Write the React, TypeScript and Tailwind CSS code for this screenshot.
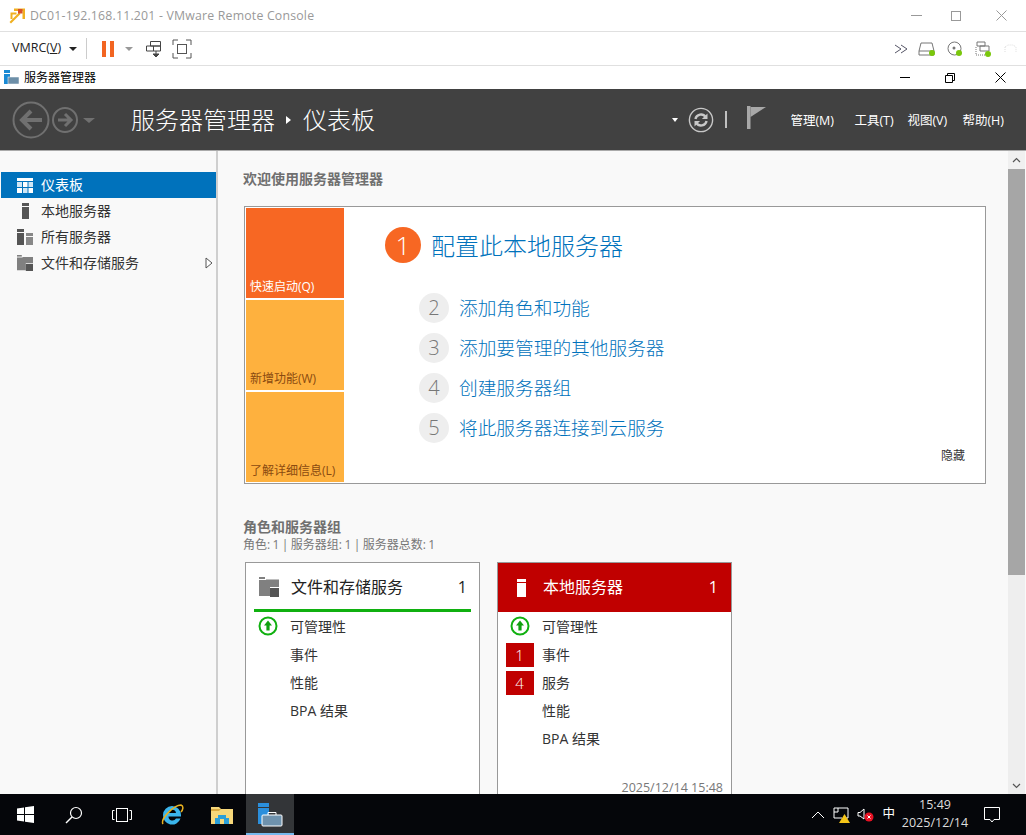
import { ReactNode } from "react";

const font = { fontFamily: '"Open Sans", "Noto Sans CJK SC", sans-serif' };

function UpIcon() {
  return (
    <svg width="20" height="20" viewBox="0 0 20 20">
      <circle cx="10" cy="10" r="8.5" fill="#fff" stroke="#10b010" strokeWidth="2" />
      <path d="M10 4.5 L14 9.5 H11.6 V14.5 H8.4 V9.5 H6 Z" fill="#10a010" />
    </svg>
  );
}

function FilesIcon({ size = 20, light = "#808080", dark = "#555" }: { size?: number; light?: string; dark?: string }) {
  return (
    <svg width={size} height={size} viewBox="0 0 20 20">
      <path d="M0 0 H6 V2 H0 Z" fill={light} />
      <path d="M0 3 H7 V2.5 H20 V10 H11 V19 H0 Z" fill={light} />
      <path d="M11 11 H20 V20 H11 Z" fill={dark} />
    </svg>
  );
}

function NavItem({ icon, label, active, arrow }: { icon: ReactNode; label: string; active?: boolean; arrow?: boolean }) {
  return (
    <div className={`flex h-[26px] items-center text-[14px] ${active ? "bg-[#0072bc] text-white" : "text-[#333]"}`}>
      <div className="flex w-[40px] justify-center pl-[8px]">{icon}</div>
      <span className="flex-1 pb-[2px]">{label}</span>
      {arrow && (
        <svg width="8" height="12" viewBox="0 0 8 12" className="mr-[3px]">
          <path d="M1 1 L7 6 L1 11 Z" fill="#fff" stroke="#555" strokeWidth="1" />
        </svg>
      )}
    </div>
  );
}

function Tile({ label, color, text }: { label: string; color: string; text: string }) {
  return (
    <div className={`flex h-[90px] items-end px-[4px] pb-[3px] text-[12px] leading-[16px] ${color} ${text}`}>{label}</div>
  );
}

function Step({ n, label }: { n: number; label: string }) {
  return (
    <div className="flex h-[40px] items-center">
      <div className="flex h-[30px] w-[30px] items-center justify-center rounded-full bg-[#eeeeee] text-[20px] font-light text-[#777]">
        {n}
      </div>
      <span className="ml-[10px] text-[18.7px] font-light text-[#0072bc]">{label}</span>
    </div>
  );
}

function Row({ badge, up, label }: { badge?: number; up?: boolean; label: string }) {
  return (
    <div className="flex h-[28px] items-center text-[14px] text-[#333]">
      <div className="flex w-[44px] items-center justify-center pr-[1px]">
        {up && <UpIcon />}
        {badge !== undefined && (
          <div className="mt-[2px] flex h-[24px] w-[28px] items-center justify-center bg-[#c00000] text-[15px] font-light text-white">
            {badge}
          </div>
        )}
      </div>
      <span>{label}</span>
    </div>
  );
}

export default function App() {
  return (
    <div style={font} className="flex h-[835px] w-[1026px] flex-col overflow-hidden bg-white">
      {/* vmrc title bar */}
      <div className="flex h-[32px] shrink-0 items-center border-b border-[#e0e0e0] pl-[9px]">
        <svg width="16" height="16" viewBox="0 0 16 16">
          <path d="M5 0.5 H16 V11 H13.5 V3 H5 Z" fill="#f0b020" />
          <path d="M10 4.5 L0.5 14 L2 15.5 L11.5 6 Z" fill="#f0b020" />
          <path d="M1.5 4.5 H7.5 V6.5 H3.5 V11 H1.5 Z" fill="#f0b020" />
          <rect x="9" y="1" width="4.5" height="4.5" fill="#d9502a" />
        </svg>
        <span className="ml-[5px] pt-[2px] text-[12.3px] tracking-[0.2px] text-[#999]">DC01-192.168.11.201 - VMware Remote Console</span>
        <div className="ml-auto flex items-center">
          <div className="h-[1px] w-[11px] bg-[#999]" />
          <div className="ml-[29px] h-[10px] w-[10px] border border-[#999]" />
          <svg width="11" height="11" viewBox="0 0 11 11" className="ml-[35px] mr-[19px]">
            <path d="M0.5 0.5 L10.5 10.5 M10.5 0.5 L0.5 10.5" stroke="#999" />
          </svg>
        </div>
      </div>

      {/* vmrc toolbar */}
      <div className="flex h-[34px] shrink-0 items-center border-b border-[#e0e0e0] pl-[12px]">
        <span className="text-[12.5px] text-[#222]">
          VMRC(<span className="underline">V</span>)
        </span>
        <div className="ml-[8px] h-0 w-0 border-x-[4px] border-t-[4px] border-x-transparent border-t-[#222]" />
        <div className="ml-[9px] h-[21px] w-[1px] bg-[#ccc]" />
        <div className="ml-[15px] h-[16px] w-[4px] bg-[#f26522]" />
        <div className="ml-[4px] h-[16px] w-[4px] bg-[#f26522]" />
        <div className="ml-[11px] h-0 w-0 border-x-[4px] border-t-[4px] border-x-transparent border-t-[#999]" />
        <svg width="18" height="18" viewBox="0 0 18 18" className="ml-[12px]">
          <path d="M5.5 1.5 H15.5 V6 H5.5 Z M1.5 6 H15.5 V11 H1.5 Z M8.5 6 V11" fill="none" stroke="#444" />
          <path d="M11 11 V14 M8 14 L11 17 L14 14 Z" fill="#444" stroke="#444" />
        </svg>
        <svg width="20" height="20" viewBox="0 0 20 20" className="ml-[9px]">
          <path d="M1 6 V1 H6 M14 1 H19 V6 M19 14 V19 H14 M6 19 H1 V14" fill="none" stroke="#555" />
          <rect x="5.5" y="5.5" width="9" height="9" fill="none" stroke="#555" />
        </svg>
        <div className="ml-auto flex items-center">
          <svg width="15" height="10" viewBox="0 0 15 10">
            <path d="M1 1 L7 5 L1 9 M7 1 L13 5 L7 9" fill="none" stroke="#556" />
          </svg>
          <svg width="18" height="14" viewBox="0 0 18 14" className="ml-[9px]">
            <path d="M3 1 H14 L16 9 V13 H1 V9 Z M1 9 H16" fill="none" stroke="#777" />
            <circle cx="14" cy="11" r="3" fill="#7ac70c" />
          </svg>
          <svg width="16" height="16" viewBox="0 0 16 16" className="ml-[11px]">
            <circle cx="7.5" cy="7.5" r="6.5" fill="none" stroke="#777" />
            <circle cx="7" cy="7" r="1.5" fill="#777" />
            <circle cx="12" cy="12" r="3" fill="#7ac70c" />
          </svg>
          <svg width="16" height="16" viewBox="0 0 16 16" className="ml-[12px]">
            <path d="M2 1 H10 V5 H2 Z M5 5 H14 V10 H5 Z" fill="none" stroke="#777" />
            <path d="M1 6 V14 H10" fill="none" stroke="#777" strokeDasharray="1 1" />
            <circle cx="13" cy="13" r="3" fill="#7ac70c" />
          </svg>
          <svg width="13" height="10" viewBox="0 0 13 10" className="ml-[13px] mr-[9px]">
            <path d="M1 3 L4 1 H9 L12 3 V8 M1 3 V8" fill="none" stroke="#ddd" strokeDasharray="1 1" />
          </svg>
        </div>
      </div>

      {/* server manager title bar */}
      <div className="flex h-[23px] shrink-0 items-center pl-[4px]">
        <svg width="15" height="15" viewBox="0 0 15 15">
          <rect x="0" y="0" width="6" height="3" fill="#1a8ad4" />
          <rect x="0" y="4" width="6" height="10" fill="#1a8ad4" />
          <rect x="4" y="7" width="11" height="7" fill="#6d8fa8" stroke="#fff" strokeWidth="0.5" />
        </svg>
        <span className="ml-[5px] text-[12px] text-black">服务器管理器</span>
        <div className="ml-auto flex items-center">
          <div className="h-[1px] w-[10px] bg-black" />
          <svg width="10" height="10" viewBox="0 0 10 10" className="ml-[35px]">
            <path d="M0.5 2.5 H7.5 V9.5 H0.5 Z M2.5 2.5 V0.5 H9.5 V7.5 H7.5" fill="none" stroke="#000" />
          </svg>
          <svg width="11" height="11" viewBox="0 0 11 11" className="ml-[40px] mr-[20px]">
            <path d="M0.5 0.5 L10.5 10.5 M10.5 0.5 L0.5 10.5" stroke="#000" />
          </svg>
        </div>
      </div>

      {/* dark header */}
      <div className="flex h-[62px] shrink-0 items-center border-b border-[#aaa] bg-[#414141] text-white">
        <svg width="86" height="40" viewBox="0 0 86 40" className="ml-[12px]">
          <circle cx="19" cy="20" r="17.5" fill="none" stroke="#707070" strokeWidth="2" />
          <path d="M30 20 H11 M19 11 L10 20 L19 29" fill="none" stroke="#707070" strokeWidth="4" />
          <circle cx="53" cy="20" r="12" fill="none" stroke="#707070" strokeWidth="2" />
          <path d="M46 20 H59 M53 14 L59 20 L53 26" fill="none" stroke="#707070" strokeWidth="3" />
          <path d="M71 18 H83 L77 23 Z" fill="#707070" />
        </svg>
        <span className="ml-[33px] text-[24px] font-light">服务器管理器</span>
        <div className="ml-[11px] h-0 w-0 border-y-[4px] border-l-[5px] border-y-transparent border-l-white" />
        <span className="ml-[12px] text-[24px] font-light">仪表板</span>
        <div className="ml-auto flex items-center">
          <div className="h-0 w-0 border-x-[3.5px] border-t-[4px] border-x-transparent border-t-white" />
          <svg width="26" height="26" viewBox="0 0 28 28" className="ml-[10px]">
            <circle cx="14" cy="14" r="12.5" fill="none" stroke="#c8c8c8" strokeWidth="1.5" />
            <path d="M8 13 A6 6 0 0 1 19 11 M20 15 A6 6 0 0 1 9 17" fill="none" stroke="#c8c8c8" strokeWidth="2.5" />
            <path d="M21 7 V13 H15 Z M7 21 V15 H13 Z" fill="#c8c8c8" />
          </svg>
          <div className="ml-[11px] h-[17px] w-[2px] bg-[#c0c0c0]" />
          <svg width="19" height="23" viewBox="0 0 19 23" className="mb-[4px] ml-[20px]">
            <rect x="0" y="0" width="3.5" height="23" fill="#a8a8a8" />
            <path d="M3.5 1 H19 L3.5 11 Z" fill="#a8a8a8" />
          </svg>
          <div className="ml-[24px] flex pt-[4px] text-[12.5px]">
            <span className="w-[64px]">管理(M)</span>
            <span className="w-[53px]">工具(T)</span>
            <span className="w-[55px]">视图(V)</span>
            <span className="mr-[22px]">帮助(H)</span>
          </div>
        </div>
      </div>

      {/* body */}
      <div className="flex min-h-0 flex-1 overflow-hidden bg-[#f9f9f9]">
        <div className="w-[218px] shrink-0 border-r-2 border-[#cfcfcf] pl-[1px] pt-[21px]">
          <NavItem
            active
            label="仪表板"
            icon={
              <svg width="16" height="15" viewBox="0 0 16 15">
                <rect width="16" height="3" fill="#fff" />
                <rect y="4" width="5" height="5" fill="#cfe6f5" />
                <rect x="6" y="4" width="4.5" height="5" fill="#fff" />
                <rect x="11.5" y="4" width="4.5" height="5" fill="#cfe6f5" />
                <rect y="10" width="5" height="5" fill="#fff" />
                <rect x="6" y="10" width="4.5" height="5" fill="#cfe6f5" />
                <rect x="11.5" y="10" width="4.5" height="5" fill="#fff" />
              </svg>
            }
          />
          <NavItem
            label="本地服务器"
            icon={
              <svg width="7" height="16" viewBox="0 0 7 16">
                <rect width="7" height="3" fill="#555" />
                <rect y="4" width="7" height="12" fill="#555" />
              </svg>
            }
          />
          <NavItem
            label="所有服务器"
            icon={
              <svg width="16" height="16" viewBox="0 0 16 16">
                <rect width="7" height="3" fill="#555" />
                <rect y="4" width="7" height="12" fill="#555" />
                <rect x="9" y="4" width="7" height="3" fill="#888" />
                <rect x="9" y="8" width="7" height="8" fill="#888" />
              </svg>
            }
          />
          <NavItem arrow label="文件和存储服务" icon={<FilesIcon size={16} />} />
        </div>

        <div className="min-w-0 flex-1 pl-[25px] pt-[20px]">
          <div className="text-[14px] font-semibold leading-[16px] text-[#707070]">欢迎使用服务器管理器</div>

          {/* quick start panel */}
          <div className="ml-[1px] mt-[19px] flex h-[278px] w-[742px] border border-[#999] bg-white p-[1px]">
            <div className="flex w-[98px] flex-col gap-[2px]">
              <Tile label="快速启动(Q)" color="bg-[#f76723]" text="text-white" />
              <Tile label="新增功能(W)" color="bg-[#feb13e]" text="text-[#8a4a10]" />
              <Tile label="了解详细信息(L)" color="bg-[#feb13e]" text="text-[#8a4a10]" />
            </div>
            <div className="relative flex-1 pl-[41px] pt-[19px]">
              <div className="flex items-center">
                <div className="flex h-[36px] w-[36px] items-center justify-center rounded-full bg-[#f76723] text-[26px] font-light text-white">
                  1
                </div>
                <span className="ml-[10px] pt-[2px] text-[24px] font-light leading-[34px] text-[#0072bc]">配置此本地服务器</span>
              </div>
              <div className="ml-[34px] mt-[25px]">
                <Step n={2} label="添加角色和功能" />
                <Step n={3} label="添加要管理的其他服务器" />
                <Step n={4} label="创建服务器组" />
                <Step n={5} label="将此服务器连接到云服务" />
              </div>
              <span className="absolute bottom-[17px] right-[19px] text-[12px] text-[#333]">隐藏</span>
            </div>
          </div>

          <div className="mt-[34px] text-[14px] font-semibold leading-[17px] text-[#707070]">角色和服务器组</div>
          <div className="mt-[2px] text-[12px] leading-[15px] text-[#777] [word-spacing:-0.7px]">角色: 1 | 服务器组: 1 | 服务器总数: 1</div>

          {/* cards */}
          <div className="ml-[2px] mt-[10px] flex gap-[17px]">
            <div className="h-[260px] w-[235px] shrink-0 border border-[#999] bg-white">
              <div className="mx-[8px] flex h-[49px] items-center border-b-[3px] border-[#10b010] pl-[5px] pr-[4px] pt-[2px]">
                <FilesIcon size={20} />
                <span className="ml-[12px] flex-1 text-[16px] text-[#222]">文件和存储服务</span>
                <span className="text-[16px] text-[#222]">1</span>
              </div>
              <div>
                <Row up label="可管理性" />
                <Row label="事件" />
                <Row label="性能" />
                <Row label="BPA 结果" />
              </div>
            </div>
            <div className="relative h-[260px] w-[235px] shrink-0 border border-[#999] bg-white">
              <div className="flex h-[49px] items-center bg-[#c00000] pl-[19px] pr-[13px] text-white">
                <svg width="9" height="18" viewBox="0 0 9 18">
                  <rect width="9" height="3" fill="#fff" />
                  <rect y="4" width="9" height="14" fill="#fff" />
                </svg>
                <span className="ml-[17px] flex-1 pb-[2px] text-[16px]">本地服务器</span>
                <span className="pb-[2px] text-[16px]">1</span>
              </div>
              <div>
                <Row up label="可管理性" />
                <Row badge={1} label="事件" />
                <Row badge={4} label="服务" />
                <Row label="性能" />
                <Row label="BPA 结果" />
              </div>
              <span className="absolute right-[8px] top-[219px] text-[12.5px] leading-[12px] text-[#777]">2025/12/14 15:48</span>
            </div>
          </div>
        </div>

        {/* scrollbar */}
        <div className="mr-[1px] flex w-[17px] shrink-0 flex-col bg-[#eeeeee]">
          <div className="flex h-[18px] shrink-0 items-center justify-center bg-[#f0f0f0]">
            <svg width="9" height="6" viewBox="0 0 9 6">
              <path d="M1 5 L4.5 1.5 L8 5" fill="none" stroke="#555" strokeWidth="1.2" />
            </svg>
          </div>
          <div className="h-[406px] shrink-0 bg-[#a6a6a6]" />
          <div className="mt-auto flex h-[17px] shrink-0 items-center justify-center">
            <svg width="9" height="6" viewBox="0 0 9 6">
              <path d="M1 1 L4.5 4.5 L8 1" fill="none" stroke="#555" strokeWidth="1.2" />
            </svg>
          </div>
        </div>
      </div>

      {/* taskbar */}
      <div className="flex h-[41px] shrink-0 items-center bg-[#05060a] text-white">
        <div className="flex w-[50px] justify-center">
          <svg width="17" height="17" viewBox="0 0 17 17">
            <path d="M0 2.4 L7 1.4 V8 H0 Z M8 1.2 L17 0 V8 H8 Z M0 9 H7 V15.6 L0 14.6 Z M8 9 H17 V17 L8 15.8 Z" fill="#fff" />
          </svg>
        </div>
        <div className="flex w-[48px] justify-center">
          <svg width="18" height="18" viewBox="0 0 18 18">
            <circle cx="11" cy="7" r="5.5" fill="none" stroke="#fff" strokeWidth="1.2" />
            <path d="M7 11 L1 17" stroke="#fff" strokeWidth="1.5" />
          </svg>
        </div>
        <div className="flex w-[48px] justify-center">
          <svg width="20" height="14" viewBox="0 0 20 14">
            <rect x="4.5" y="0.5" width="11" height="13" fill="none" stroke="#fff" />
            <path d="M2.5 2.5 H0.5 V11.5 H2.5 M17.5 2.5 H19.5 V11.5 H17.5" fill="none" stroke="#fff" />
          </svg>
        </div>
        <div className="flex w-[51px] justify-center">
          <svg width="24" height="24" viewBox="0 0 24 24">
            <path d="M3 12 A9 9 0 0 1 21 12 V13.5 H8.5 A4 4 0 0 0 16 15.5 H20.5 A9 9 0 0 1 3 12 Z M8.5 10 H16 A3.8 3.8 0 0 0 8.5 10 Z" fill="#3bb5ec" fillRule="evenodd" />
            <path d="M3 21 C0 16 14 2 21 2 C24 3 23 7 21 9" fill="none" stroke="#e8b020" strokeWidth="1.5" />
          </svg>
        </div>
        <div className="flex w-[49px] justify-center">
          <svg width="22" height="18" viewBox="0 0 22 18">
            <path d="M0 1 H8 L10 3 H22 V18 H0 Z" fill="#f6d77a" />
            <path d="M0 3 H10 L8 5 H0 Z" fill="#d9a93f" />
            <path d="M7 9 H15 V12 H18 V18 H4 V12 H7 Z" fill="#2b9fd9" />
            <rect x="9" y="13" width="4" height="5" fill="#f6d77a" />
          </svg>
        </div>
        <div className="relative flex h-[41px] w-[48px] items-center justify-center bg-[#333538]">
          <svg width="26" height="24" viewBox="0 0 26 24">
            <rect x="1" y="0" width="11" height="4" fill="#2b8fdc" />
            <rect x="1" y="5" width="11" height="16" fill="#2b8fdc" />
            <rect x="5" y="12" width="20" height="11" rx="1" fill="#6f92ad" stroke="#fff" />
            <path d="M11 12 V9.5 H19 V12" fill="none" stroke="#fff" />
          </svg>
          <div className="absolute inset-x-0 bottom-0 h-[2px] bg-[#76b9ed]" />
        </div>
        <div className="ml-auto flex items-center">
          <svg width="14" height="8" viewBox="0 0 14 8">
            <path d="M1 7 L7 1 L13 7" fill="none" stroke="#fff" />
          </svg>
          <svg width="17" height="16" viewBox="0 0 17 16" className="ml-[8px]">
            <path d="M1 1 H5 V5 H1 Z M5 1 H15 V11 H12 M1 5 V11 H9" fill="none" stroke="#fff" />
            <path d="M11.5 7 L17 16 H6 Z" fill="#f5c518" />
          </svg>
          <svg width="17" height="14" viewBox="0 0 17 14" className="ml-[7px]">
            <path d="M1 4.5 H3 L7 1 V11 L3 8 H1 Z" fill="none" stroke="#fff" />
            <circle cx="12" cy="9" r="4.5" fill="#e81123" />
            <path d="M10.5 7.5 L13.5 10.5 M13.5 7.5 L10.5 10.5" stroke="#fff" />
          </svg>
          <span className="ml-[8px] text-[12.5px]">中</span>
          <div className="ml-[6px] flex w-[68px] flex-col items-center pb-[1px] text-[12.5px] leading-[18px] text-[#ddd]">
            <span>15:49</span>
            <span>2025/12/14</span>
          </div>
          <svg width="16" height="16" viewBox="0 0 16 16" className="ml-[15px] mr-[26px]">
            <path d="M0.5 0.5 H15.5 V12.5 H10 L8 15 L6 12.5 H0.5 Z" fill="none" stroke="#fff" />
          </svg>
        </div>
      </div>
    </div>
  );
}
